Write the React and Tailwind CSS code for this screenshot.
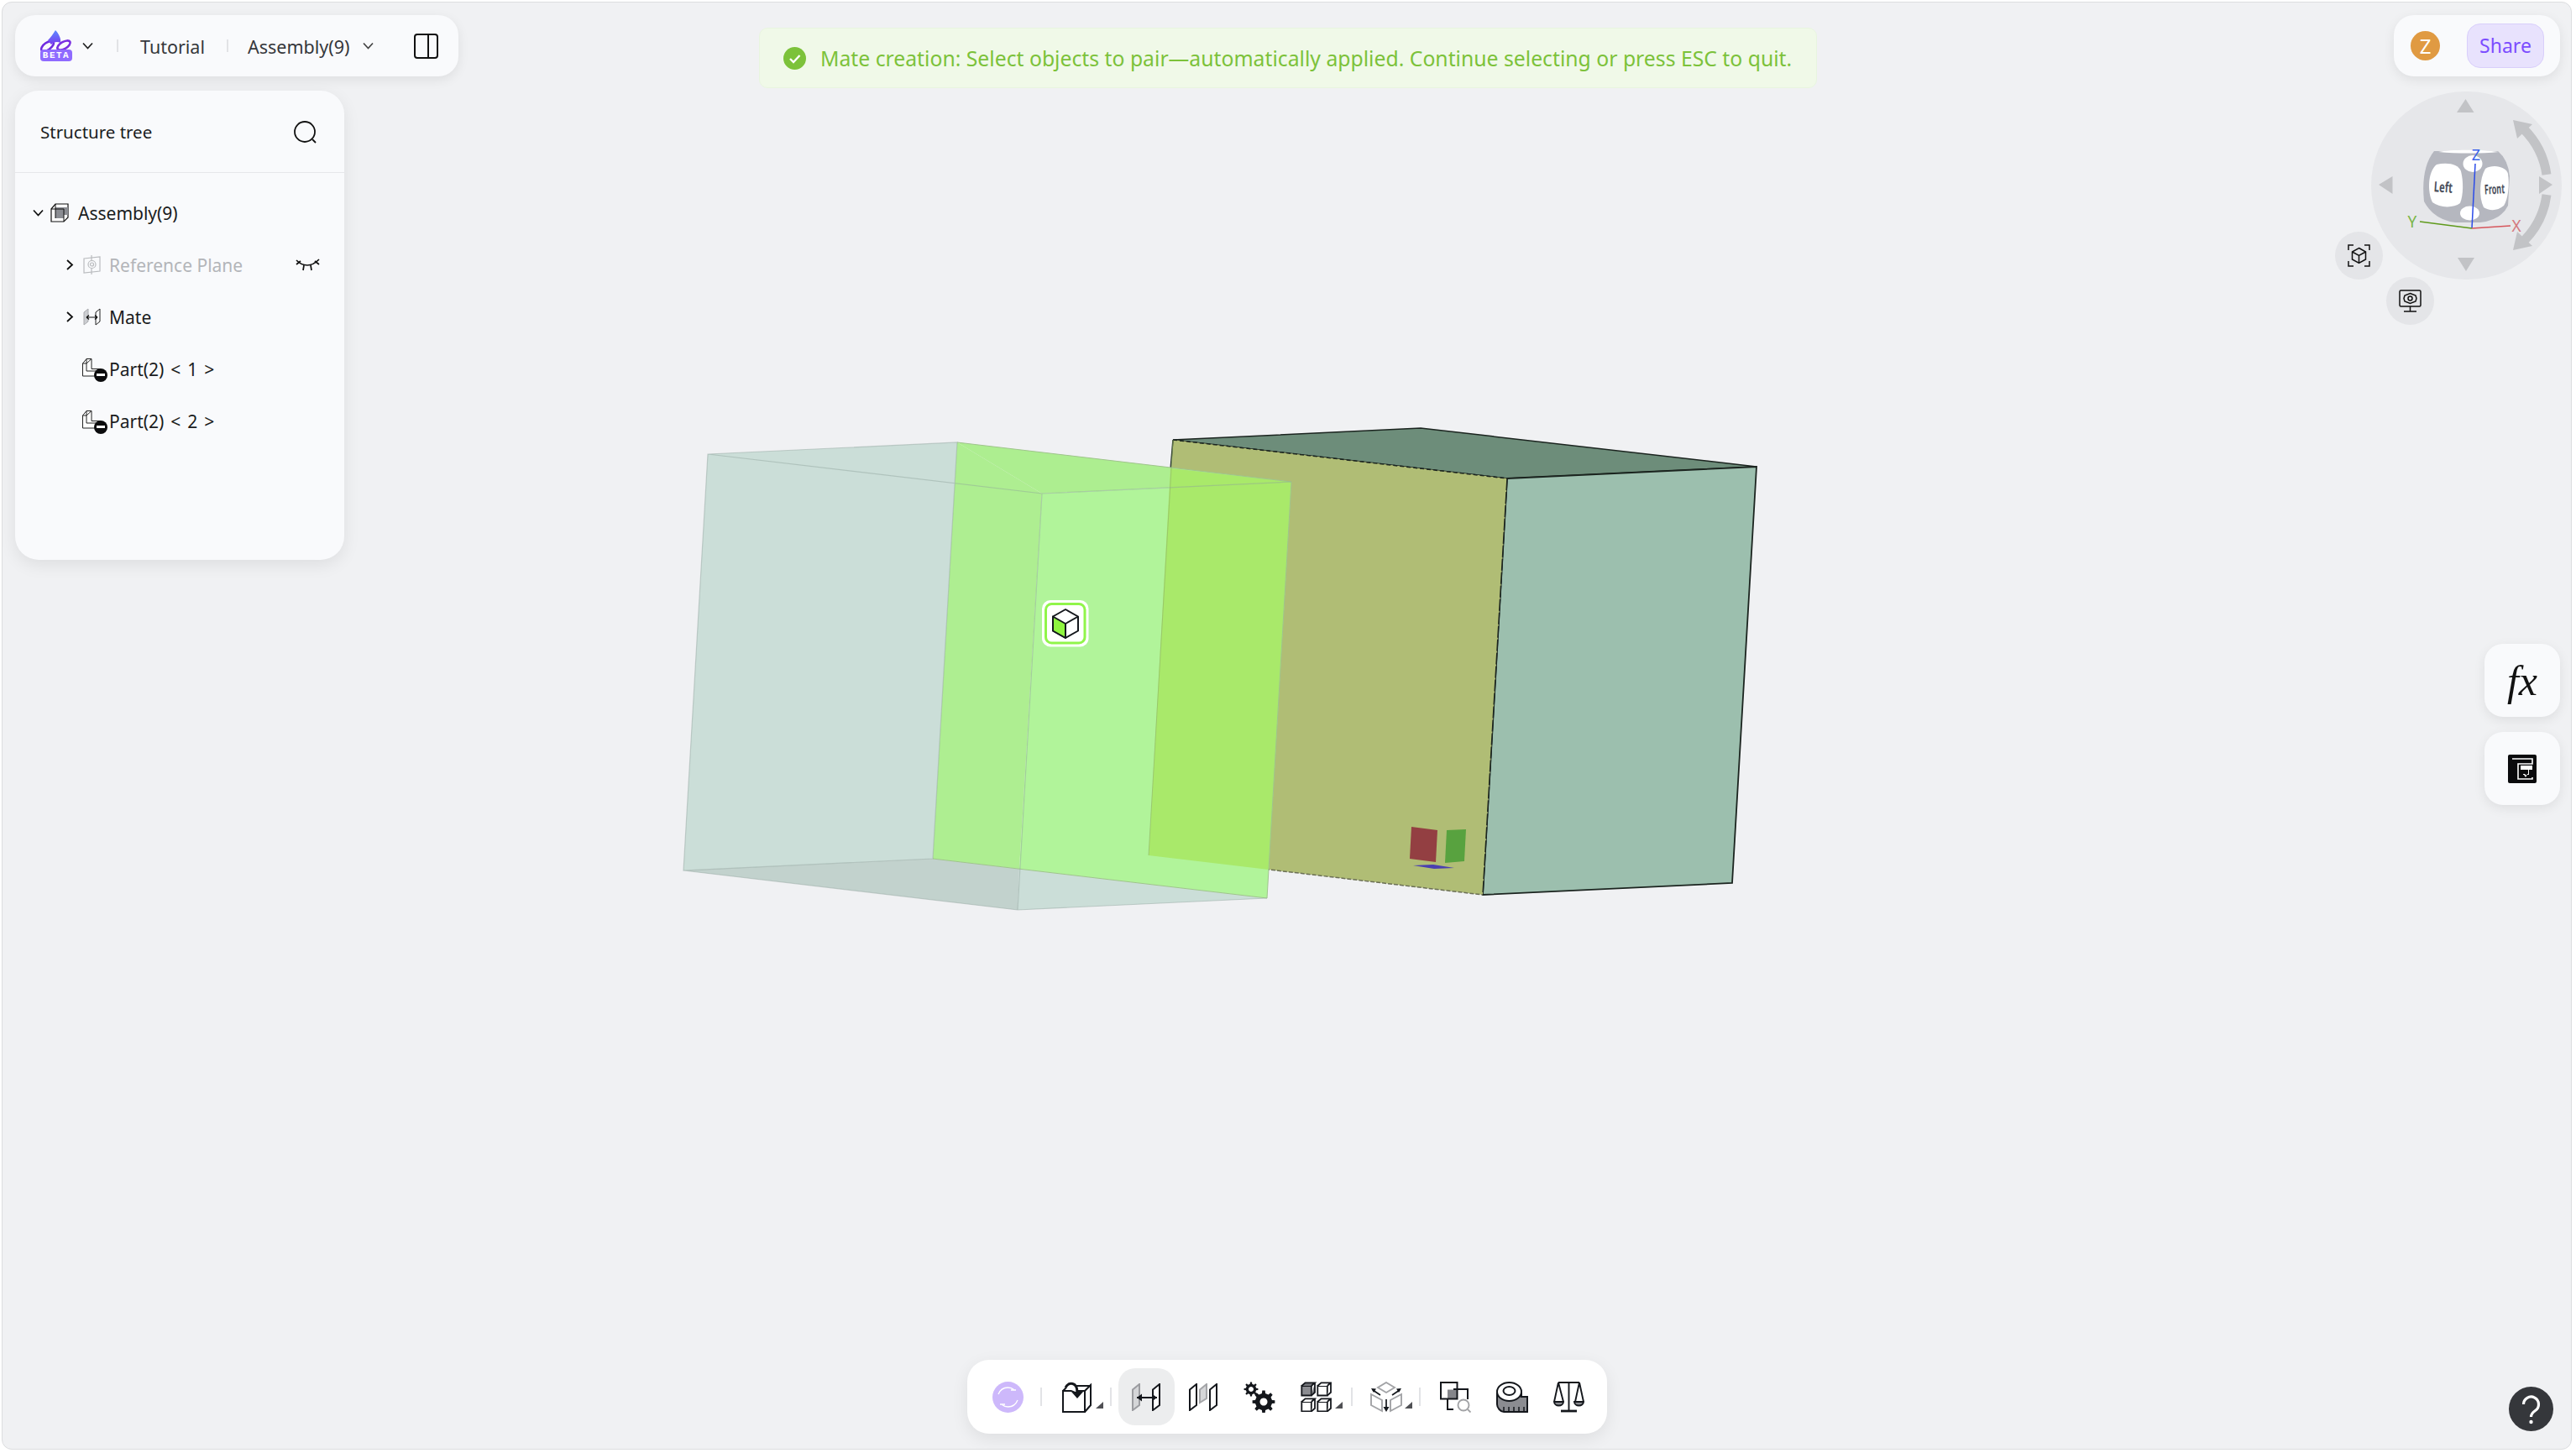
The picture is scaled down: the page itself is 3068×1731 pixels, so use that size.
import React from 'react'

const ink = '#14171c'

function gearPath(cx, cy, outer, inner, teeth) {
    const pts = []
    const step = (Math.PI * 2) / teeth
    for (let i = 0; i < teeth; i++) {
        const a = i * step
        const w = step * 0.2
        pts.push([a - w * 1.3, inner], [a - w * 0.8, outer], [a + w * 0.8, outer], [a + w * 1.3, inner])
    }
    return (
        pts
            .map(([a, r], i) => `${i === 0 ? 'M' : 'L'}${(cx + Math.cos(a) * r).toFixed(2)} ${(cy + Math.sin(a) * r).toFixed(2)}`)
            .join(' ') + ' Z'
    )
}

function Chevron({ className = '', color = '#222' }) {
    return (
        <svg viewBox="0 0 13 9" className={className} fill="none">
            <path d="M1 1.5l5.5 6 5.5-6" stroke={color} strokeWidth="1.7" />
        </svg>
    )
}

function ChevronRight() {
    return (
        <svg viewBox="0 0 9 13" className="w-[9px] h-[13px]" fill="none">
            <path d="M1 1l6 5.5-6 5.5" stroke="#111" strokeWidth="1.8" />
        </svg>
    )
}

function Logo() {
    return (
        <div className="relative w-[38px] h-[37px]">
            <svg viewBox="0 0 38 26" className="absolute left-0 top-0 w-[38px] h-[26px]" fill="none">
                <defs>
                    <linearGradient id="logoTip" x1="0" y1="0" x2="0" y2="1">
                        <stop offset="0" stopColor="#5b8bff" />
                        <stop offset="1" stopColor="#7a3df0" />
                    </linearGradient>
                </defs>
                <ellipse cx="8.500" cy="19" rx="8.500" ry="4.200" transform="rotate(-35 8.500 19)" stroke="#6f2be0" strokeWidth="2.600" />
                <ellipse cx="28" cy="18" rx="8.500" ry="4.200" transform="rotate(-30 28 18)" stroke="#7a2fe0" strokeWidth="2.600" />
                <path d="M18 0c4 4 7 10 6 15-4-2-8-1-11 2l-4-5c3-3 6-7 9-12z" fill="url(#logoTip)" />
            </svg>
            <div className="absolute left-0 bottom-0 w-[38px] h-[14px] rounded-[4px] bg-[#8f6bff] flex items-center justify-center text-white text-[11px] leading-none font-bold tracking-[1.5px] font-['Liberation_Mono',monospace]">
                BETA
            </div>
        </div>
    )
}

function AssemblyIcon() {
    return (
        <svg viewBox="0 0 22 23" className="w-[22px] h-[23px]" fill="none">
            <path d="M1 7l5-6h15v16l-5 5H1z" fill="#fff" stroke="#111" strokeWidth="1.2" />
            <path d="M6 5h15v9H16v4H6z" fill="#8b8d93" />
            <path d="M6 1v17M1 7h15v15" stroke="#111" strokeWidth="1" />
        </svg>
    )
}

function PlaneIcon() {
    return (
        <svg viewBox="0 0 21 23" className="w-[21px] h-[23px]" fill="none" stroke="#b9bbbe" strokeWidth="1.2">
            <path d="M1 4l19-2v17l-19 2z" />
            <path d="M10 0v23" />
            <circle cx="10.5" cy="11" r="4.5" fill="#f9fafc" />
            <circle cx="10.5" cy="11" r="2" />
        </svg>
    )
}

function SmallMateIcon() {
    return (
        <svg viewBox="0 0 21 21" className="w-[21px] h-[21px]" fill="none">
            <path d="M1 5l5-4v15l-5 4z" fill="#ccced2" stroke="#a8a9ad" strokeWidth="1" />
            <path d="M15 5l5-4v15l-5 4z" stroke="#222" strokeWidth="1" />
            <path d="M4 11h13M4 11l3-2.5M4 11l3 2.5M17 11l-3-2.5M17 11l-3 2.5" stroke="#111" strokeWidth="1.2" />
        </svg>
    )
}

function PartIcon() {
    return (
        <div className="relative w-[30px] h-[28px] mt-[3px]">
            <svg viewBox="0 0 23 22" className="absolute left-0 top-0 w-[23px] h-[22px]" fill="none" stroke="#222" strokeWidth="1">
                <path d="M.5 6L5 .5h6v12h11V21H.5z" fill="#fff" />
                <path d="M5 .5V6H.5M5 6v9h17M11 .5L5 6" />
            </svg>
            <div className="absolute right-0 bottom-0 w-[16px] h-[16px] rounded-full bg-[#0b0b0d] flex items-center justify-center">
                <div className="w-[10px] h-[3px] bg-white" />
            </div>
        </div>
    )
}

function ClosedEye() {
    return (
        <svg viewBox="0 0 29 16" className="w-[29px] h-[16px]" fill="none" stroke="#111" strokeWidth="1.7">
            <path d="M1 3c5 5 8 6 13 6s9-2 14-7" />
            <path d="M1 8l5-4M28 8l-5-4M9 15l1-6M19 15l-1-6" />
        </svg>
    )
}

function TreeRow({ indent, chevron, icon, label, muted, children }) {
    return (
        <div className={`h-[62px] flex items-center ${indent}`}>
            {chevron}
            {icon}
            <span className={`pt-[2px] text-[21px] leading-none whitespace-nowrap ${muted ? 'text-[#b3b5b9]' : 'text-[#1a1c20]'}`}>{label}</span>
            {children}
        </div>
    )
}

function Divider({ className }) {
    return <div className={`w-[2px] h-[22px] bg-[#e2e3e6] shrink-0 ${className}`} />
}

function DropMark() {
    return (
        <svg viewBox="0 0 9 8" className="absolute right-[3px] bottom-[20px] w-[9px] h-[8px]">
            <path d="M9 0v8H0z" fill="#4f5054" />
        </svg>
    )
}

function Slot({ active, children }) {
    return (
        <div className={`relative w-[67.5px] h-[68px] shrink-0 flex items-center justify-center rounded-[20px] ${active ? 'bg-[#ecedee]' : ''}`}>
            {children}
        </div>
    )
}

function SyncIcon() {
    return (
        <svg viewBox="0 0 37 37" className="w-[37px] h-[37px]" fill="none">
            <circle cx="18.5" cy="18.5" r="18.5" fill="#cdb8fb" />
            <path d="M7 15c2-5 6-8 11.500-8 3 0 5 .8 7 2.500M30 22c-2 5-6 8-11.500 8-3 0-5-.8-7-2.500" stroke="#fff" strokeWidth="1.300" />
            <path d="M22 10h6M9 27h6" stroke="#fff" strokeWidth="1.300" />
        </svg>
    )
}

function ExtrudeIcon() {
    return (
        <svg viewBox="0 0 35 37" className="w-[35px] h-[37px]" fill="none" stroke={ink} strokeWidth="2">
            <path d="M1 11h26v25H1zM27 11l7-7v24l-7 8M1 11l6-6h27" fill="#fff" />
            <path d="M4 7C8 0 18 0 18 13" stroke={ink} strokeWidth="3" fill="#fff" />
            <path d="M11 12h14l-7 8z" fill={ink} stroke="none" />
        </svg>
    )
}

function MateIcon() {
    return (
        <svg viewBox="0 0 34 33" className="w-[34px] h-[33px]" fill="none">
            <path d="M1 7.500l8-6.500v25l-8 6z" fill="#d5d6d8" stroke="#9b9ca0" strokeWidth="2" />
            <path d="M25 7.500l8-6.500v25l-8 6z" fill="#fff" stroke={ink} strokeWidth="2" />
            <path d="M6 17h24" stroke={ink} strokeWidth="2" />
            <path d="M6 17l6-4.500v9zM30 17l-6-4.500v9z" fill={ink} />
        </svg>
    )
}

function PlanesIcon() {
    return (
        <svg viewBox="0 0 34 33" className="w-[34px] h-[33px]" fill="none">
            <path d="M1 7.500l8-6.500v25l-8 6z" stroke={ink} strokeWidth="2" />
            <path d="M13 7.500l8-6.500v17l-8 5z" fill="#d5d6d8" stroke="#a4a5a8" strokeWidth="2" />
            <path d="M25 7.500l8-6.500v25l-8 6z" fill="#fff" stroke={ink} strokeWidth="2" />
        </svg>
    )
}

function GearsIcon() {
    return (
        <svg viewBox="0 0 38 37" className="w-[38px] h-[37px]" fill={ink}>
            <path fillRule="evenodd" d={`${gearPath(9, 9, 8.500, 6.300, 8)} M9 6a3 3 0 1 0 .01 0z`} />
            <path fillRule="evenodd" d={`${gearPath(24, 24, 13.500, 10.200, 8)} M24 19.500a4.500 4.500 0 1 0 .01 0z`} />
        </svg>
    )
}

function MiniCube({ x, y, filled }) {
    return (
        <g transform={`translate(${x} ${y})`}>
            <path d="M.8 4.500h11.500v11.500H.8z" fill={filled ? '#8b8c91' : '#fff'} stroke={ink} strokeWidth="1.800" />
            <path d="M.8 4.500L5 .8h11.500l-4.200 3.700M16.500.8v11.500l-4.200 3.700" fill={filled ? '#75767b' : '#fff'} stroke={ink} strokeWidth="1.800" />
        </g>
    )
}

function PatternIcon() {
    return (
        <svg viewBox="0 0 37 36" className="w-[37px] h-[36px]" fill="none">
            <MiniCube x={0.500} y={0.500} filled />
            <MiniCube x={19.500} y={0.500} />
            <MiniCube x={0.500} y={19.500} />
            <MiniCube x={19.500} y={19.500} />
        </svg>
    )
}

function CubeArrowsIcon() {
    return (
        <svg viewBox="0 0 38 37" className="w-[38px] h-[37px]" fill="none">
            <path d="M19 1l10 6-10 6-10-6zM1 15l13 7v13L1 28zM37 15l-13 7v13l13-7z" stroke="#a2a3a6" strokeWidth="1.900" />
            <path d="M19 21v13M3 10l9 6M35 10l-9 6" stroke={ink} strokeWidth="1.700" />
            <path d="M15.500 30h7L19 36zM1 8l6 .5-3 4.500zM37 8l-6 .5 3 4.500z" fill={ink} />
        </svg>
    )
}

function InterferenceIcon() {
    return (
        <svg viewBox="0 0 37 37" className="w-[37px] h-[37px]" fill="none">
            <rect x="9" y="9.500" width="11" height="11" fill="#84858a" />
            <rect x="1" y="1" width="19.500" height="19.500" stroke={ink} strokeWidth="2" />
            <path d="M9 20v13h7M16 9h17v12" stroke={ink} strokeWidth="2" />
            <circle cx="28" cy="28" r="6.500" stroke="#a2a3a6" strokeWidth="1.900" />
            <path d="M33 33l3.500 3.500" stroke="#a2a3a6" strokeWidth="1.900" />
        </svg>
    )
}

function TapeIcon() {
    return (
        <svg viewBox="0 0 38 37" className="w-[38px] h-[37px]" fill="none" stroke={ink} strokeWidth="2">
            <path d="M1 13v14c0 4 4 9 8 9h28V18H30V13" fill="#8b8c91" />
            <ellipse cx="15.500" cy="12" rx="14.500" ry="11" fill="#fff" />
            <ellipse cx="15.500" cy="11" rx="7" ry="5" fill="#fff" />
            <path d="M9 36v-6M15 36v-6M21 36v-6M27 36v-6M33 36v-6" strokeWidth="1.500" />
        </svg>
    )
}

function ScaleIcon() {
    return (
        <svg viewBox="0 0 37 37" className="w-[37px] h-[37px]" fill="none" stroke={ink} strokeWidth="1.900">
            <path d="M6 1h25M18.500 1v33" />
            <path d="M9 35h19" strokeWidth="2.800" />
            <path d="M6 1L1 24M6 1l6 23M31 1l-5 23M31 1l5 23" />
            <path d="M1 24h11a5.500 4.500 0 0 1-11 0zM25 24h11a5.500 4.500 0 0 1-11 0z" fill="#8b8c91" />
        </svg>
    )
}

function FocusCube() {
    return (
        <svg viewBox="0 0 27 27" className="w-[27px] h-[27px]" fill="none" stroke="#111" strokeWidth="1.500">
            <path d="M1 7V1h6M20 1h6v6M1 20v6h6M26 20v6h-6" />
            <path d="M13.500 4.500l8 4.500v9l-8 4.500-8-4.500V9zM5.500 9l8 4.500 8-4.500M13.500 13.500v9" />
        </svg>
    )
}

function MonitorNut() {
    return (
        <svg viewBox="0 0 27 27" className="w-[27px] h-[27px]" fill="none" stroke="#111" strokeWidth="1.500">
            <rect x="1" y="1" width="25" height="19" rx="1.500" />
            <path d="M13.500 4.500l6.500 2.500 1 3.500-1 3.500-6.500 2.500-6.500-2.500-1-3.500 1-3.500z" />
            <circle cx="13.500" cy="10.500" r="2.500" />
            <path d="M13.500 20v6M6 26h15" />
        </svg>
    )
}

// the 3d view, coordinates are page pixels
function Scene() {
    return (
        <svg viewBox="0 0 3068 1731" className="absolute left-[-3px] top-[-3px] w-[3068px] h-[1731px]" fill="none">
            {/* solid box */}
            <polygon points="1397,524 1692,510 2092,556 1795,570" fill="#6d8d7a" stroke="#1b241f" strokeWidth="1.500" />
            <polygon points="1795,570 2092,556 2063,1052 1766,1066" fill="#9cbfae" stroke="#1b241f" strokeWidth="1.800" />
            <polygon points="1397,524 1795,570 1766,1066 1368,1019" fill="#b0bd75" />
            <path d="M1397 524L1795 570" stroke="#1b241f" strokeWidth="1.500" strokeDasharray="5 3" />
            <path d="M1795 570L1766 1066" stroke="#1b241f" strokeWidth="1.500" strokeDasharray="14 2" />
            <path d="M1368 1019L1766 1066" stroke="#6b6f55" strokeWidth="1.500" strokeDasharray="5 2" />
            <path d="M1397 524L1394 560" stroke="#1b241f" strokeWidth="1.500" />
            <polygon points="1681,985 1712,989 1710,1027 1679,1023" fill="#933f42" />
            <polygon points="1723,989 1746,988 1744,1026 1721,1028" fill="#58a23f" />
            <polygon points="1683,1031 1707,1030 1732,1034 1708,1035" fill="#4a3fb0" />

            {/* ghost box */}
            <polygon points="843,541 1140,527 1111,1023 814,1037" fill="#cbded8" />
            <polygon points="814,1037 1111,1023 1214,1035 1212,1084" fill="#c2d2cd" />
            <polygon points="1214,1035 1509,1070 1212,1084" fill="#cbded8" />
            <polygon points="1140,527 1241,588 1214,1035 1111,1023" fill="#aeee91" />
            <polygon points="1140,527 1538,574 1241,588" fill="#adee90" />
            <polygon points="1241,588 1538,574 1509,1070 1214,1035" fill="#b1f49a" />
            <polygon points="1394,558 1538,574 1511,1036 1368,1019" fill="#a9e96a" />
            <path d="M1140 527L1538 574L1509 1070L1111 1023" stroke="#9fc48c" strokeWidth="1" />
            <path d="M1397 524L1368 1019" stroke="#8fb06a" strokeOpacity="0.600" strokeWidth="1" />
            <path d="M843 541L1140 527L1111 1023L814 1037ZM814 1037L1212 1084L1509 1070M843 541L1241 588L1212 1084M1241 588L1538 574" stroke="#8fa19b" strokeOpacity="0.450" strokeWidth="1.200" />

            {/* face marker */}
            <rect x="1241" y="715" width="55.500" height="55.500" rx="10" fill="#fff" />
            <rect x="1245.500" y="719.500" width="46.500" height="46.500" rx="7" stroke="#90f54a" strokeWidth="3" />
            <g stroke="#14171c" strokeWidth="2" strokeLinejoin="round">
                <path d="M1269 726l15 8.500v17l-15 8.500-15-8.500v-17z" fill="#fff" />
                <path d="M1254 734.500l15 8.500v17l-15-8.500z" fill="#8ff53f" />
                <path d="M1269 743l15-8.500" />
            </g>
        </svg>
    )
}

function NavCube() {
    return (
        <svg viewBox="2825 109 227 224" className="absolute inset-0 w-full h-full overflow-visible" fill="none">
            <g fill="#c2c3c6">
                <polygon points="2937.500,118 2927,134 2947.500,134" />
                <polygon points="2938,323 2928,307 2948,307" />
                <polygon points="2834,220 2850.500,210 2850.500,231" />
                <polygon points="3041,220 3025,210 3025,231" />
                <polygon points="2994,143 3017,148 2999,165" />
                <polygon points="2994,298 3017,293 2999,276" />
            </g>
            <path d="M3034 208A96 96 0 0 0 3007 154M3034 232A96 96 0 0 1 3007 287" stroke="#c2c3c6" strokeWidth="11" />
            <path d="M2900 180L2976 180Q2988 190 2990 210L2988 245Q2980 262 2955 265L2925 265Q2900 262 2888 240Q2884 200 2900 180Z" fill="#b5b7bf" />
            <path d="M2905 181c15-3 50-3 72 0-20 2-50 2-72 0z" fill="#fff" />
            <path d="M2903 196c12-3 26-1 29 8 3 12 3 28-1 38-8 6-24 6-33-1-6-12-6-36 5-45z" fill="#fff" />
            <path d="M2961 201c10-6 25-2 27 6 2 14 0 30-5 38-8 7-18 6-24 2-6-12-5-34 2-46z" fill="#fff" />
            <ellipse cx="2946" cy="195" rx="11.500" ry="10" fill="#fff" />
            <ellipse cx="2942.500" cy="254" rx="11.500" ry="8.500" fill="#fff" />
            <text x="2911" y="229" textAnchor="middle" fontSize="17" fontWeight="700" fill="#4b4f5c" fontFamily="'Noto Sans', sans-serif" transform="rotate(4 2911 223)" textLength="22" lengthAdjust="spacingAndGlyphs">Left</text>
            <text x="2972" y="231" textAnchor="middle" fontSize="16" fontWeight="700" fill="#4b4f5c" fontFamily="'Noto Sans', sans-serif" transform="rotate(-3 2972 225)" textLength="24" lengthAdjust="spacingAndGlyphs">Front</text>
            <path d="M2945 272L2949 195" stroke="#2b4be8" strokeWidth="1.500" />
            <path d="M2945 272L2883 264" stroke="#5f9a1c" strokeWidth="1.500" />
            <path d="M2945 272L2991 269" stroke="#d6565c" strokeWidth="1.500" />
            <text x="2950" y="191" textAnchor="middle" fontSize="18" fill="#3b63ea" fontFamily="'Noto Sans', sans-serif">Z</text>
            <text x="2874" y="271" textAnchor="middle" fontSize="19" fill="#7ab648" fontFamily="'Noto Sans', sans-serif">Y</text>
            <text x="2998" y="276" textAnchor="middle" fontSize="19" fill="#d47a7f" fontFamily="'Noto Sans', sans-serif">X</text>
        </svg>
    )
}

export default function App() {
    return (
        <div className="w-[3068px] h-[1731px] bg-white pl-[2px] pt-[2px] font-['Noto_Sans',sans-serif]">
            <div className="relative w-[3061px] h-[1725px] box-border border border-[#dcdddf] rounded-[12px] bg-[#f0f1f3] overflow-hidden flex flex-col justify-between">
                <Scene />

                {/* top area */}
                <div className="relative flex items-start pl-[15px] pr-[13px] pt-[15px]">
                    <div className="w-[528px] shrink-0">
                        <div className="h-[73px] w-[528px] rounded-[24px] bg-[#f9fafc] shadow-[0_4px_14px_rgba(0,0,0,0.08)] flex items-center pl-[30px]">
                            <Logo />
                            <Chevron className="ml-[12px] w-[13px] h-[9px]" />
                            <Divider className="ml-[28px] !h-[15px]" />
                            <span className="ml-[26px] w-[76px] pt-[2px] text-[21.5px] leading-none text-[#35373b]">Tutorial</span>
                            <Divider className="ml-[27px] !h-[15px]" />
                            <span className="ml-[23px] w-[124px] pt-[2px] text-[21.5px] leading-none text-[#35373b] whitespace-nowrap">Assembly(9)</span>
                            <Chevron className="ml-[13px] w-[13px] h-[9px]" color="#444" />
                            <div className="ml-[48px] w-[29px] h-[30px] rounded-[4px] border-2 border-[#111] flex justify-start">
                                <div className="ml-[14px] w-[2px] h-full bg-[#111]" />
                            </div>
                        </div>

                        <div className="mt-[17px] w-[392px] h-[559px] rounded-[28px] bg-[#f9fafc] shadow-[0_6px_20px_rgba(0,0,0,0.08)]">
                            <div className="h-[98px] border-b border-[#e6e7ea] flex items-center justify-between pl-[30px] pr-[33px]">
                                <span className="pt-[2px] text-[20.5px] leading-none text-[#1a1c20]">Structure tree</span>
                                <svg viewBox="0 0 27 27" className="w-[27px] h-[27px] mt-[2px]" fill="none" stroke="#111" strokeWidth="1.800">
                                    <circle cx="13" cy="13" r="12" />
                                    <path d="M22 22l4 4" />
                                </svg>
                            </div>
                            <div className="pt-[16px]">
                                <TreeRow
                                    indent="pl-[21px]"
                                    chevron={<Chevron className="w-[13px] h-[9px] mr-[8px]" color="#111" />}
                                    icon={<div className="mr-[11px]"><AssemblyIcon /></div>}
                                    label="Assembly(9)"
                                />
                                <TreeRow
                                    indent="pl-[61px] pr-[29px]"
                                    chevron={<div className="mr-[11px]"><ChevronRight /></div>}
                                    icon={<div className="mr-[10px]"><PlaneIcon /></div>}
                                    label="Reference Plane"
                                    muted
                                >
                                    <div className="ml-auto"><ClosedEye /></div>
                                </TreeRow>
                                <TreeRow
                                    indent="pl-[61px]"
                                    chevron={<div className="mr-[11px]"><ChevronRight /></div>}
                                    icon={<div className="mr-[10px]"><SmallMateIcon /></div>}
                                    label="Mate"
                                />
                                <TreeRow indent="pl-[80px]" icon={<div className="mr-[2px]"><PartIcon /></div>} label={<span className="[word-spacing:2.5px]">{'Part(2) < 1 >'}</span>} />
                                <TreeRow indent="pl-[80px]" icon={<div className="mr-[2px]"><PartIcon /></div>} label={<span className="[word-spacing:2.5px]">{'Part(2) < 2 >'}</span>} />
                            </div>
                        </div>
                    </div>

                    {/* message */}
                    <div className="ml-[358px] mt-[15px] w-[1260px] h-[72px] rounded-[10px] border border-[#e8f5df] bg-[#f0f9e8] flex items-center pl-[28px]">
                        <svg viewBox="0 0 27 27" className="w-[27px] h-[27px] shrink-0">
                            <circle cx="13.500" cy="13.500" r="13.500" fill="#7cc23a" />
                            <path d="M8 14l4 4 7.500-8" fill="none" stroke="#fff" strokeWidth="2.400" />
                        </svg>
                        <span className="ml-[17px] pt-[3px] text-[24.75px] leading-none text-[#7cc23a] whitespace-nowrap">
                            Mate creation: Select objects to pair—automatically applied. Continue selecting or press ESC to quit.
                        </span>
                    </div>

                    {/* right column */}
                    <div className="ml-auto flex flex-col items-end">
                        <div className="w-[198px] h-[73px] rounded-[24px] bg-[#f9fafc] shadow-[0_4px_14px_rgba(0,0,0,0.08)] flex items-center pl-[20px]">
                            <div className="w-[35px] h-[35px] rounded-full bg-[#e09a42] flex items-center justify-center text-white text-[24px] leading-none">
                                Z
                            </div>
                            <div className="ml-[32px] w-[92px] h-[53px] rounded-[16px] border border-[#d9cffb] bg-[#e8e2fd] flex items-center justify-center text-[#7c4dff] text-[23px] leading-none">
                                Share
                            </div>
                        </div>

                        <div className="relative mt-[18px] mr-[-2px] w-[227px] h-[224px] rounded-full bg-[#e6e7ea]">
                            <NavCube />
                            <div className="absolute left-[-43px] top-[167px] w-[57px] h-[57px] rounded-full bg-[#e4e5e8] flex items-center justify-center">
                                <FocusCube />
                            </div>
                            <div className="absolute left-[18px] top-[221px] w-[57px] h-[57px] rounded-full bg-[#e4e5e8] flex items-center justify-center">
                                <MonitorNut />
                            </div>
                        </div>

                        <div className="mt-[434px] w-[90px] h-[87px] rounded-[22px] bg-[#f9fafc] shadow-[0_4px_14px_rgba(0,0,0,0.08)] flex items-center justify-center font-['Liberation_Serif',serif] italic text-[50px] leading-none text-[#111]">
                            fx
                        </div>
                        <div className="mt-[18px] w-[90px] h-[87px] rounded-[22px] bg-[#f9fafc] shadow-[0_4px_14px_rgba(0,0,0,0.08)] flex items-center justify-center">
                            <svg viewBox="0 0 34 34" className="w-[34px] h-[34px]">
                                <rect width="34" height="34" rx="2" fill="#0a0a0c" />
                                <path d="M5 5h24v6H12v18h17v-2" fill="none" stroke="#fff" strokeWidth="1.600" />
                                <path d="M15 13h14v5h-4v6h-2l-2 3-2-3h-1v-6h-3z" fill="#fff" />
                                <path d="M18 18h6v5h-1l-1 2-2-2h-2z" fill="#0a0a0c" />
                            </svg>
                        </div>
                    </div>
                </div>

                {/* bottom area */}
                <div className="relative grid grid-cols-[1fr_auto_1fr] items-end pb-[18px]">
                    <div />
                    <div className="h-[88px] rounded-[26px] bg-white shadow-[0_6px_20px_rgba(0,0,0,0.08)] flex items-center pl-[15px] pr-[11px]">
                        <Slot><SyncIcon /></Slot>
                        <Divider className="ml-[5px] mr-[8px]" />
                        <Slot><ExtrudeIcon /><DropMark /></Slot>
                        <Divider className="ml-[5px] mr-[8px]" />
                        <Slot active><MateIcon /></Slot>
                        <Slot><PlanesIcon /></Slot>
                        <Slot><GearsIcon /></Slot>
                        <Slot><PatternIcon /><DropMark /></Slot>
                        <Divider className="ml-[7px] mr-[7px]" />
                        <Slot><CubeArrowsIcon /><DropMark /></Slot>
                        <Divider className="ml-[5px] mr-[8px]" />
                        <Slot><InterferenceIcon /></Slot>
                        <Slot><TapeIcon /></Slot>
                        <Slot><ScaleIcon /></Slot>
                    </div>
                    <div className="justify-self-end mr-[21px] mb-[3px] w-[53px] h-[53px] rounded-full bg-[#35373b] flex items-center justify-center">
                        <svg viewBox="0 0 53 53" className="w-[53px] h-[53px]" fill="none">
                            <path d="M17.500 21a9 9 0 1 1 14 7.500c-3 2-5 3.500-5 7.500" stroke="#fff" strokeWidth="3.200" />
                            <circle cx="26.500" cy="42" r="2.200" fill="#fff" />
                        </svg>
                    </div>
                </div>
            </div>
        </div>
    )
}
